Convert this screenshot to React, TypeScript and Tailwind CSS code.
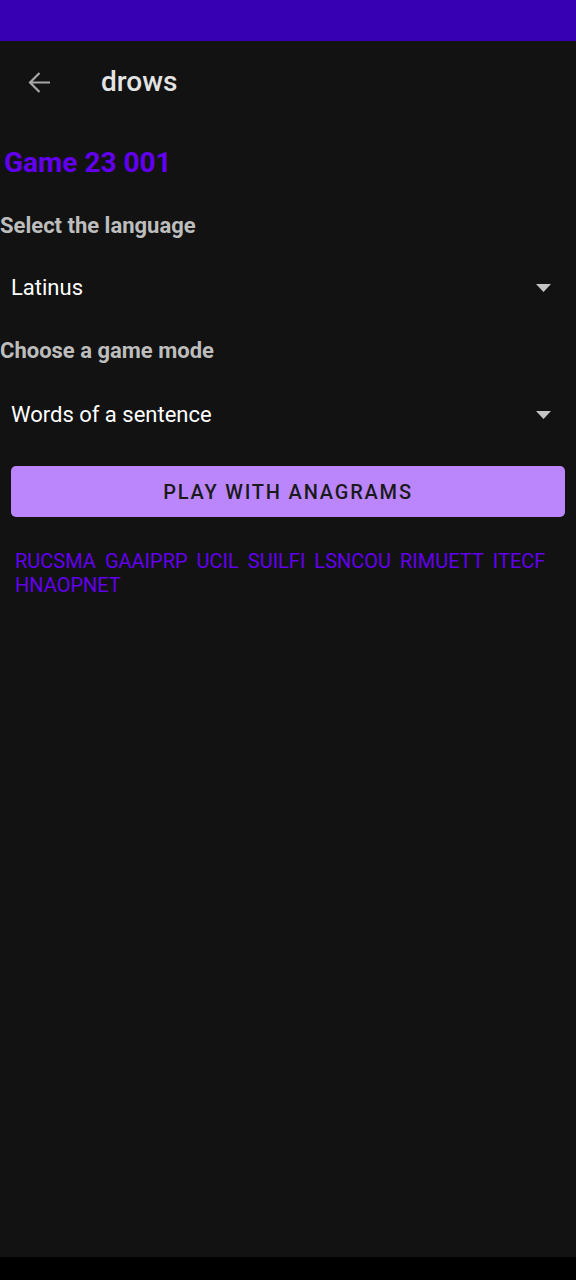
import React from "react";

const Triangle = () => (
  <svg width="15" height="8" viewBox="0 0 15 8" className="shrink-0">
    <polygon points="0,0 15,0 7.5,8" fill="#c4c4c4" />
  </svg>
);

const Spinner = ({ value }: { value: string }) => (
  <div className="flex h-[48px] items-center justify-between pl-[11px] pr-[25px]">
    <span className="text-[22px] leading-[28px] text-white">{value}</span>
    <Triangle />
  </div>
);

export default function App() {
  const words = ["RUCSMA", "GAAIPRP", "UCIL", "SUILFI", "LSNCOU", "RIMUETT", "ITECF", "HNAOPNET"];
  return (
    <div
      className="flex h-[1280px] w-[576px] flex-col bg-[#121212]"
      style={{ fontFamily: "Roboto, 'Noto Sans', sans-serif" }}
    >
      <div className="h-[41px] shrink-0 bg-[#3700b3]" />
      <div className="flex h-[80px] shrink-0 items-center pt-[2px]">
        <div className="ml-[28px] flex h-[23px] w-[23px] items-center">
          <svg width="23" height="23" viewBox="0 0 23 23">
            <path
              d="M22 11.5H2M11.5 2L2 11.5L11.5 21"
              fill="none"
              stroke="#a6a6a6"
              strokeWidth="2.2"
            />
          </svg>
        </div>
        <span className="ml-[50px] text-[28px] font-medium leading-[32px] text-[#e3e3e3]">drows</span>
      </div>
      <div className="flex-1">
        <div className="mt-[26px] pl-[4px] text-[28px] font-bold leading-[32px] text-[#6200ee]">Game 23 001</div>
        <div className="mt-[33px] text-[22px] font-bold leading-[28px] text-[#bdbdbd]">Select the language</div>
        <div className="mt-[24px]">
          <Spinner value="Latinus" />
        </div>
        <div className="mt-[25px] text-[22px] font-bold leading-[28px] text-[#bdbdbd]">Choose a game mode</div>
        <div className="mt-[26px]">
          <Spinner value="Words of a sentence" />
        </div>
        <div className="mx-[11px] mt-[27px] flex h-[51px] items-center justify-center rounded-[5px] bg-[#bb86fc]">
          <span className="text-[20px] font-medium uppercase tracking-[0.09em] text-[#1a1a1a]">Play with anagrams</span>
        </div>
        <div className="mt-[32px] flex flex-wrap gap-x-[9px] pl-[15px] pr-[15px] text-[20px] leading-[24px] text-[#6200ee]">
          {words.map((w) => (
            <span key={w}>{w}</span>
          ))}
        </div>
      </div>
      <div className="h-[23px] shrink-0 bg-black" />
    </div>
  );
}
